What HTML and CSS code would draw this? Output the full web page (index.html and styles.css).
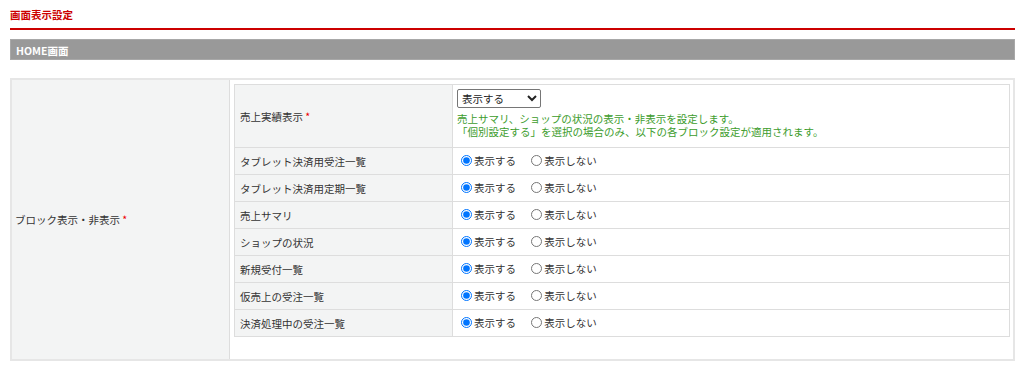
FILE: index.html
```html
<!DOCTYPE html>
<html lang="ja">
<head>
    <meta charset="UTF-8">
    <meta name="viewport" content="width=device-width, initial-scale=1.0">
    <title>画面表示設定</title>
    <link rel="stylesheet" href="styles.css">
</head>
<body>

    <div class="page">
        <h2 class="page-title">画面表示設定</h2>

        <div class="section-bar">HOME画面</div>

        <!-- Block display settings -->
        <table class="form-table">
            <tr>
                <th class="outer-label">ブロック表示・非表示 <span class="required">*</span></th>
                <td class="outer-body">
                    <table class="block-table">
                        <tr class="first-row">
                            <th>売上実績表示 <span class="required">*</span></th>
                            <td>
                                <select class="display-select">
                                    <option>表示する</option>
                                    <option>表示しない</option>
                                    <option>個別設定する</option>
                                </select>
                                <p class="note">売上サマリ、ショップの状況の表示・非表示を設定します。</p>
                                <p class="note">「個別設定する」を選択の場合のみ、以下の各ブロック設定が適用されます。</p>
                            </td>
                        </tr>
                        <tr>
                            <th>タブレット決済用受注一覧</th>
                            <td>
                                <label class="radio"><input type="radio" name="b1" checked>表示する</label>
                                <label class="radio"><input type="radio" name="b1">表示しない</label>
                            </td>
                        </tr>
                        <tr>
                            <th>タブレット決済用定期一覧</th>
                            <td>
                                <label class="radio"><input type="radio" name="b2" checked>表示する</label>
                                <label class="radio"><input type="radio" name="b2">表示しない</label>
                            </td>
                        </tr>
                        <tr>
                            <th>売上サマリ</th>
                            <td>
                                <label class="radio"><input type="radio" name="b3" checked>表示する</label>
                                <label class="radio"><input type="radio" name="b3">表示しない</label>
                            </td>
                        </tr>
                        <tr>
                            <th>ショップの状況</th>
                            <td>
                                <label class="radio"><input type="radio" name="b4" checked>表示する</label>
                                <label class="radio"><input type="radio" name="b4">表示しない</label>
                            </td>
                        </tr>
                        <tr>
                            <th>新規受付一覧</th>
                            <td>
                                <label class="radio"><input type="radio" name="b5" checked>表示する</label>
                                <label class="radio"><input type="radio" name="b5">表示しない</label>
                            </td>
                        </tr>
                        <tr>
                            <th>仮売上の受注一覧</th>
                            <td>
                                <label class="radio"><input type="radio" name="b6" checked>表示する</label>
                                <label class="radio"><input type="radio" name="b6">表示しない</label>
                            </td>
                        </tr>
                        <tr>
                            <th>決済処理中の受注一覧</th>
                            <td>
                                <label class="radio"><input type="radio" name="b7" checked>表示する</label>
                                <label class="radio"><input type="radio" name="b7">表示しない</label>
                            </td>
                        </tr>
                    </table>
                </td>
            </tr>
        </table>
    </div>

</body>
</html>
```

FILE: styles.css
```css
body {
    margin: 0;
    font-family: "Noto Sans CJK JP", "Liberation Sans", sans-serif;
    font-size: 10.5px;
    color: #333;
    background-color: #fff;
}

.page {
    padding: 8px 9px 0 10px;
}

.page-title {
    margin: 0;
    padding-bottom: 6px;
    font-size: 10.5px;
    line-height: 14px;
    font-weight: bold;
    color: #cc0000;
    border-bottom: 2px solid #cc0000;
}

.section-bar {
    margin-top: 9px;
    height: 21px;
    line-height: 21px;
    padding-left: 5px;
    background-color: #999;
    color: #fff;
    font-weight: bold;
    box-sizing: border-box;
    border: 1px solid #a8a8a8;
}

.form-table {
    margin-top: 18px;
    width: 100%;
    border-collapse: collapse;
    border: 2px solid #e6e6e6;
}

.outer-label {
    width: 213px;
    padding-left: 3px;
    text-align: left;
    font-weight: normal;
    background-color: #f3f4f4;
    border-right: 1px solid #dddddd;
}

.outer-body {
    padding: 4px 3px 22px 4px;
}

.required {
    color: #e00;
}

.block-table {
    width: 100%;
    border-collapse: collapse;
    border: 1px solid #d8d8d8;
}

.block-table th,
.block-table td {
    border: 1px solid #dddddd;
    height: 26px;
    padding: 0 5px;
    vertical-align: middle;
}

.block-table th {
    width: 207px;
    text-align: left;
    font-weight: normal;
    background-color: #f3f4f4;
}

.first-row td {
    height: auto;
    padding: 4px 4px 9px 4px;
}

.display-select {
    width: 84px;
    height: 19px;
    font-family: inherit;
    font-size: 10.5px;
    color: #222;
    border: 1px solid #767676;
    border-radius: 2px;
    background-color: #fff;
}

.note {
    margin: 0;
    line-height: 13px;
    color: #3c9c2c;
}

.display-select + .note {
    margin-top: 4px;
}

.radio {
    display: inline-flex;
    align-items: center;
    margin-right: 10px;
}

.radio input {
    width: 11px;
    height: 11px;
    margin: 0 2px 0 3px;
}
```
